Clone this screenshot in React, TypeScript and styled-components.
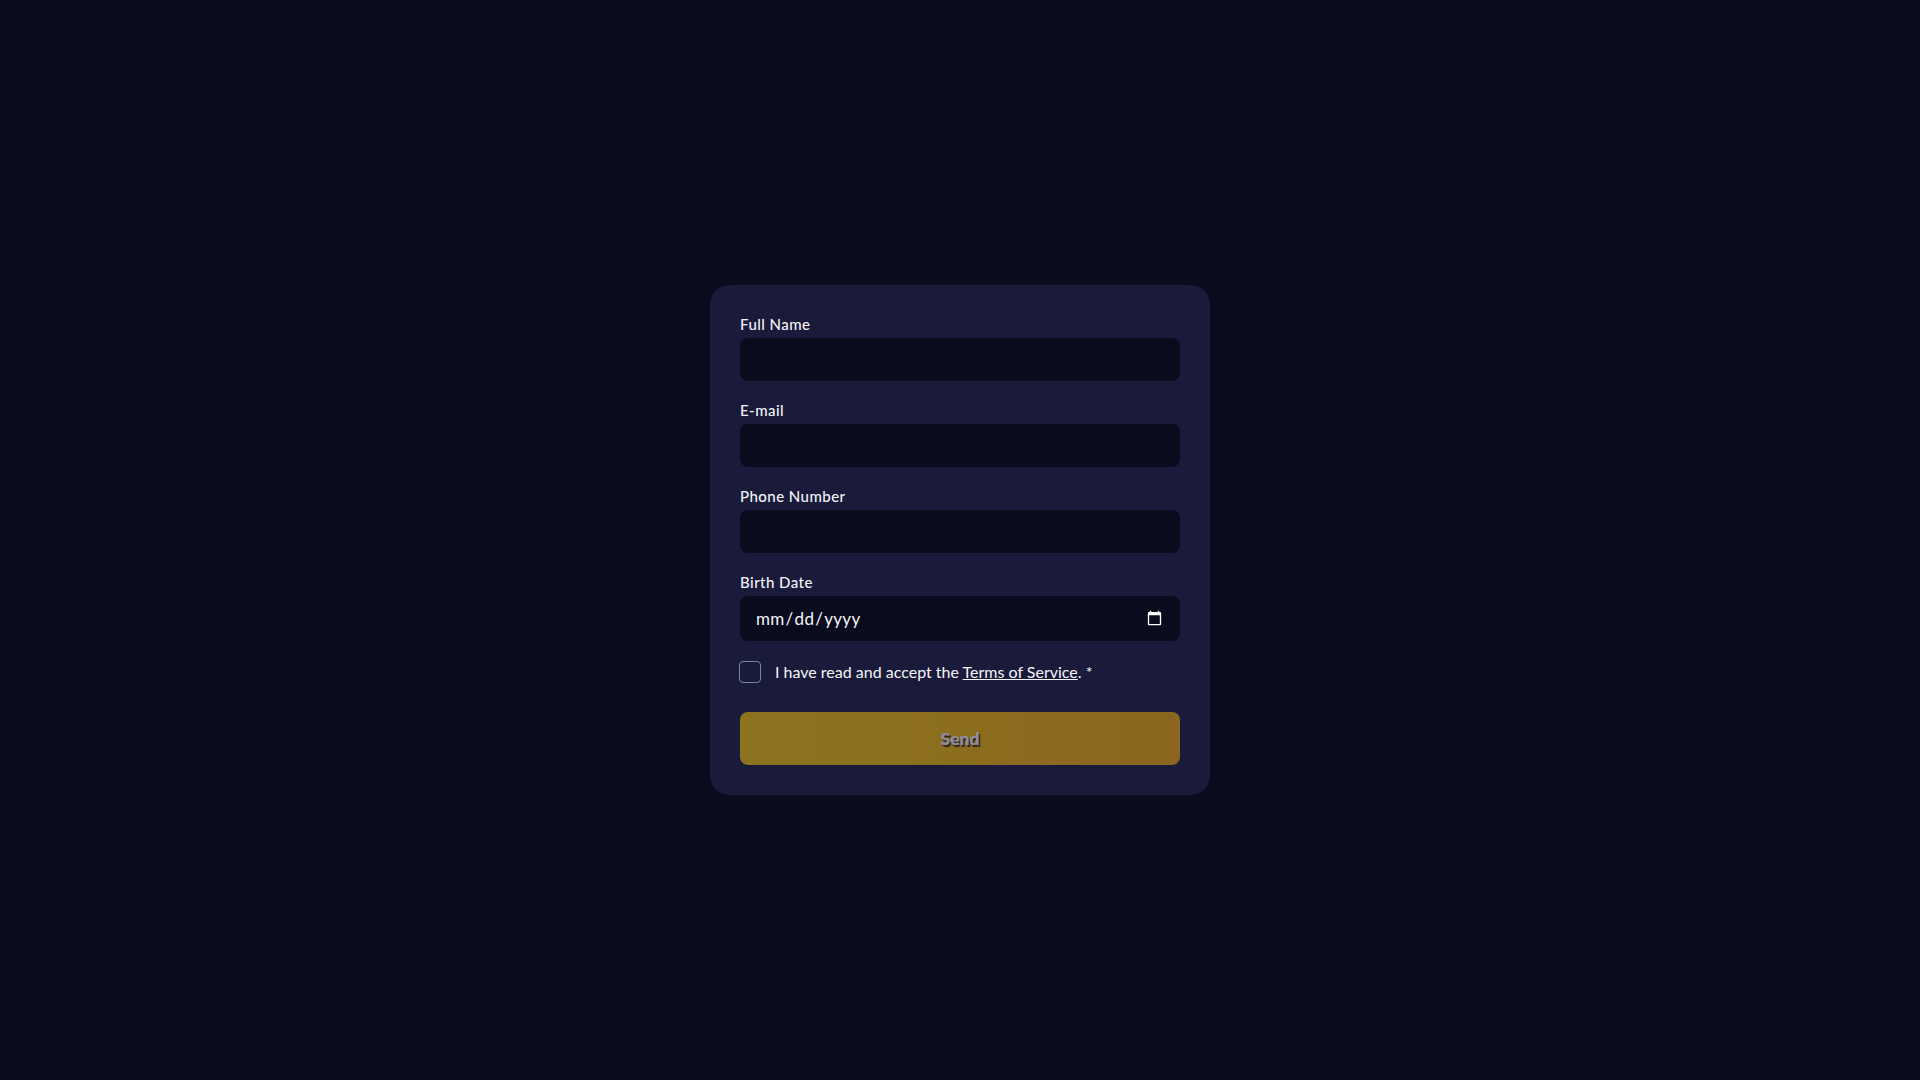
import React from "react";
import styled, { createGlobalStyle } from "styled-components";

const Global = createGlobalStyle`
  html, body { margin: 0; padding: 0; height: 100%; }
  body { background: #080c1e; font-family: "Lato", "Noto Sans", sans-serif; color: #f4f4f8; }
  #root { height: 100%; }
`;

const Page = styled.main`
  min-height: 100vh;
  display: flex;
  align-items: center;
  justify-content: center;
  box-sizing: border-box;
`;

const Card = styled.form`
  width: 500px;
  box-sizing: border-box;
  padding: 30px;
  background: #1a1b3a;
  border-radius: 20px;
  display: flex;
  flex-direction: column;
`;

const Field = styled.div`
  display: flex;
  flex-direction: column;
  margin-bottom: 20px;
`;

const Label = styled.label`
  font-size: 15px;
  line-height: 19px;
  padding-bottom: 4px;
  font-weight: 500;
  letter-spacing: 0.45px;
  color: #f4f4f8;
`;

const TextInput = styled.input`
  box-sizing: border-box;
  width: 100%;
  height: ${(p) => (p.type === "date" ? 45 : 43)}px;
  padding: 0 15px;
  border: none;
  outline: none;
  border-radius: 8px;
  background: #090c1d;
  color: #f4f4f8;
  font-family: inherit;
  font-size: 17px;
  letter-spacing: 0.3px;
  color-scheme: dark;
`;

const Consent = styled.div`
  display: flex;
  align-items: center;
  gap: 14px;
  height: 22px;
  margin-bottom: 29px;
  font-size: 16px;
  color: #f4f4f8;
`;

const ConsentText = styled.span`
  padding-bottom: 2px;
`;

const Box = styled.span`
  box-sizing: border-box;
  width: 22px;
  height: 22px;
  flex: none;
  margin-left: -1px;
  border: 1px solid #6f8aa6;
  border-radius: 4px;
`;

const TermsLink = styled.a`
  color: inherit;
  text-decoration: underline;
`;

const SendButton = styled.button`
  height: 53px;
  border: none;
  border-radius: 8px;
  background: linear-gradient(90deg, #ffcc05, #fab104);
  color: #fff;
  font-family: inherit;
  font-size: 17.5px;
  font-weight: 900;
  text-shadow: 1.5px 1.5px 1px rgba(0, 0, 0, 0.8);
  opacity: 0.5;
`;

const fields = [
  { label: "Full Name", type: "text" },
  { label: "E-mail", type: "email" },
  { label: "Phone Number", type: "tel" },
  { label: "Birth Date", type: "date" },
];

export default function App() {
  return (
    <Page>
      <Global />
      <Card onSubmit={(e) => e.preventDefault()}>
        {fields.map((f) => (
          <Field key={f.label}>
            <Label>{f.label}</Label>
            <TextInput type={f.type} />
          </Field>
        ))}
        <Consent>
          <Box />
          <ConsentText>
            I have read and accept the <TermsLink href="#">Terms of Service</TermsLink>. *
          </ConsentText>
        </Consent>
        <SendButton type="submit" disabled>
          Send
        </SendButton>
      </Card>
    </Page>
  );
}
